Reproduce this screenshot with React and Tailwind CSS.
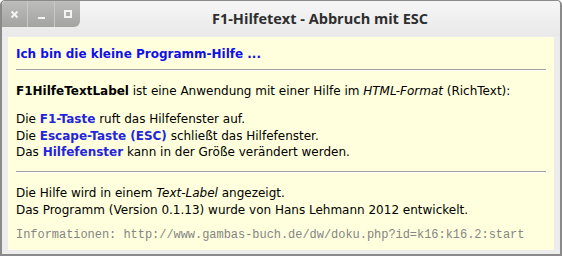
import React from "react";

export default function App() {
  const body = { fontFamily: '"DejaVu Sans", Verdana, sans-serif' };
  return (
    <div className="w-[562px] h-[257px] bg-white overflow-hidden">
      <div className="w-[562px] h-[256px] flex flex-col border-2 border-t border-[#8a8a8a] rounded-t-[5px] bg-[#ececec] overflow-hidden">
        <div className="h-[35px] flex shrink-0 bg-gradient-to-b from-[#f6f6f6] to-[#e9e9e9]">
          <div className="flex h-[26px] rounded-br-[6px] overflow-hidden">
            <div className="w-[26px] h-full flex items-center justify-center bg-gradient-to-b from-[#bdbdbb] to-[#a3a3a1] border-r border-[#c8c8c6]">
              <svg width="9" height="9" viewBox="0 0 9 9"><path d="M1.5 1.5 L7.5 7.5 M7.5 1.5 L1.5 7.5" stroke="#f4f4f4" strokeWidth="2" /></svg>
            </div>
            <div className="w-[27px] h-full flex items-end justify-center pb-[8px] bg-gradient-to-b from-[#bdbdbb] to-[#a3a3a1] border-r border-[#c8c8c6]">
              <div className="w-[7px] h-[2px] bg-[#f4f4f4]" />
            </div>
            <div className="w-[25px] h-full flex items-center justify-center bg-gradient-to-b from-[#bdbdbb] to-[#a3a3a1]">
              <div className="w-[8px] h-[8px] border-2 border-[#f4f4f4]" />
            </div>
          </div>
          <div className="flex-1 flex items-center justify-center text-[14.5px] font-bold text-[#2e2e2e]" style={{ fontFamily: '"Open Sans", sans-serif' }}>
            F1-Hilfetext - Abbruch mit ESC
          </div>
        </div>
        <div className="flex-1 px-[6px] pt-[1px] pb-[4px]">
          <div className="h-full bg-[#ffffdd] px-[8px] pt-[9px] text-[12px] leading-[17px] text-black" style={body}>
            <div className="text-[12px] font-bold text-[#1010ee]">Ich bin die kleine Programm-Hilfe ...</div>
            <div className="mt-[6px] mb-[12px] h-[2px] border-t border-[#a0a0a0] bg-[#ffffff]" />
            <div><b>F1HilfeTextLabel</b> ist eine Anwendung mit einer Hilfe im <i>HTML-Format</i> (RichText):</div>
            <div className="mt-[11px] leading-[16.5px]">
              Die <b className="text-[#2424dd]">F1-Taste</b> ruft das Hilfefenster auf.<br />
              Die <b className="text-[#2424dd]">Escape-Taste (ESC)</b> schließt das Hilfefenster.<br />
              Das <b className="text-[#2424dd]">Hilfefenster</b> kann in der Größe verändert werden.
            </div>
            <div className="mt-[10px] mb-[12px] h-[2px] border-t border-[#a0a0a0] bg-[#ffffff]" />
            <div className="leading-[17px]">
              Die Hilfe wird in einem <i>Text-Label</i> angezeigt.<br />
              Das Programm (Version 0.1.13) wurde von Hans Lehmann 2012 entwickelt.
            </div>
            <div className="mt-[8px] text-[12px] tracking-[-0.04px] text-[#858585]" style={{ fontFamily: '"Liberation Mono", monospace' }}>
              Informationen: http://www.gambas-buch.de/dw/doku.php?id=k16:k16.2:start
            </div>
          </div>
        </div>
      </div>
    </div>
  );
}
